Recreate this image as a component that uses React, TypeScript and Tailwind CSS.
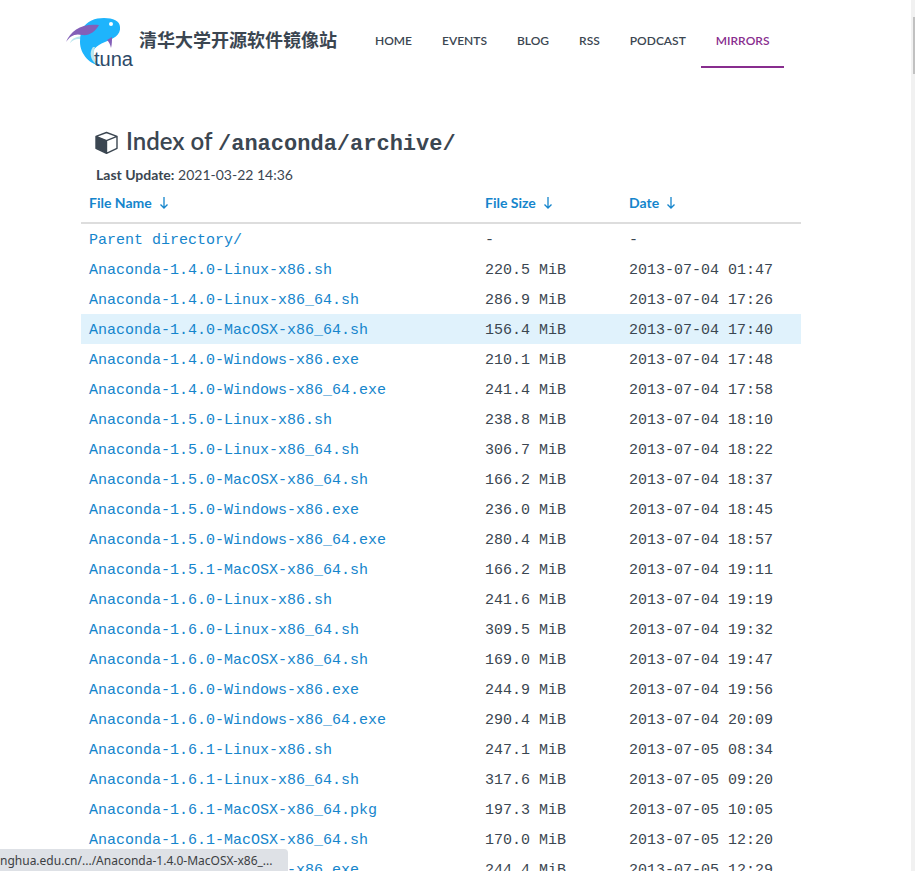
import React from "react";

interface FileEntry {
  name: string;
  size: string;
  date: string;
}

const navItems = ["HOME", "EVENTS", "BLOG", "RSS", "PODCAST", "MIRRORS"];

const files: FileEntry[] = [
  { name: "Parent directory/", size: "-", date: "-" },
  { name: "Anaconda-1.4.0-Linux-x86.sh", size: "220.5 MiB", date: "2013-07-04 01:47" },
  { name: "Anaconda-1.4.0-Linux-x86_64.sh", size: "286.9 MiB", date: "2013-07-04 17:26" },
  { name: "Anaconda-1.4.0-MacOSX-x86_64.sh", size: "156.4 MiB", date: "2013-07-04 17:40" },
  { name: "Anaconda-1.4.0-Windows-x86.exe", size: "210.1 MiB", date: "2013-07-04 17:48" },
  { name: "Anaconda-1.4.0-Windows-x86_64.exe", size: "241.4 MiB", date: "2013-07-04 17:58" },
  { name: "Anaconda-1.5.0-Linux-x86.sh", size: "238.8 MiB", date: "2013-07-04 18:10" },
  { name: "Anaconda-1.5.0-Linux-x86_64.sh", size: "306.7 MiB", date: "2013-07-04 18:22" },
  { name: "Anaconda-1.5.0-MacOSX-x86_64.sh", size: "166.2 MiB", date: "2013-07-04 18:37" },
  { name: "Anaconda-1.5.0-Windows-x86.exe", size: "236.0 MiB", date: "2013-07-04 18:45" },
  { name: "Anaconda-1.5.0-Windows-x86_64.exe", size: "280.4 MiB", date: "2013-07-04 18:57" },
  { name: "Anaconda-1.5.1-MacOSX-x86_64.sh", size: "166.2 MiB", date: "2013-07-04 19:11" },
  { name: "Anaconda-1.6.0-Linux-x86.sh", size: "241.6 MiB", date: "2013-07-04 19:19" },
  { name: "Anaconda-1.6.0-Linux-x86_64.sh", size: "309.5 MiB", date: "2013-07-04 19:32" },
  { name: "Anaconda-1.6.0-MacOSX-x86_64.sh", size: "169.0 MiB", date: "2013-07-04 19:47" },
  { name: "Anaconda-1.6.0-Windows-x86.exe", size: "244.9 MiB", date: "2013-07-04 19:56" },
  { name: "Anaconda-1.6.0-Windows-x86_64.exe", size: "290.4 MiB", date: "2013-07-04 20:09" },
  { name: "Anaconda-1.6.1-Linux-x86.sh", size: "247.1 MiB", date: "2013-07-05 08:34" },
  { name: "Anaconda-1.6.1-Linux-x86_64.sh", size: "317.6 MiB", date: "2013-07-05 09:20" },
  { name: "Anaconda-1.6.1-MacOSX-x86_64.pkg", size: "197.3 MiB", date: "2013-07-05 10:05" },
  { name: "Anaconda-1.6.1-MacOSX-x86_64.sh", size: "170.0 MiB", date: "2013-07-05 12:20" },
  { name: "Anaconda-1.6.1-Windows-x86.exe", size: "244.4 MiB", date: "2013-07-05 12:29" },
];

const ACTIVE_FILE = "Anaconda-1.4.0-MacOSX-x86_64.sh";

function TunaLogo() {
  return (
    <svg className="h-[50px] w-[65px] shrink-0 overflow-visible" viewBox="0 0 65 50" aria-hidden="true">
      {/* Far fin */}
      <path d="M4 26 C6 21 11 19 18 19 L17 23 C12 21 8 22 4 26Z" fill="#b9e6ee" />
      {/* Body */}
      <path
        d="M16 12 C21 4 29 1 38 1 C47 1 54 4 54 10 C55 18 47 22 39 25 C29 29 25 34 27 40 C28 44 31 47 36 49 C24 48 14 37 14 25 C14 19 15 15 16 12Z"
        fill="#1eb4fc"
      />
      <path d="M27 30 C23 35 24 43 31 48 C28 41 27 35 29 30Z" fill="#b9e6ee" />
      {/* Fins */}
      <path d="M0 25 C5 13 16 6 33 8 C29 15 23 19 16 18 C9 16 4 19 0 25Z" fill="#835fb8" />
      <path d="M41 23 L46 20 C46 24 46 27 45 31 C44 27 43 25 41 23Z" fill="#835fb8" />
      <circle cx="45" cy="7" r="2" fill="#fff" />
      <text
        x="28"
        y="49"
        fill="#2d4a68"
        fontSize="20"
        fontFamily="'Liberation Sans', sans-serif"
      >
        tuna
      </text>
    </svg>
  );
}

function CubeIcon() {
  return (
    <svg className="h-6 w-6 shrink-0" viewBox="0 0 24 24" aria-hidden="true">
      <path
        d="M12.5 1.5 L23 5.3 V17.3 L12.5 22.3 L2 17.3 V5.3Z M2 5.3 L12.5 9.6 L23 5.3 M12.5 9.6 V22.3"
        fill="none"
        stroke="#3b4651"
        strokeWidth="1.4"
        strokeLinejoin="round"
      />
      <path d="M2 5.3 L12.5 9.6 V22.3 L2 17.3Z" fill="#3b4651" />
    </svg>
  );
}

function SortArrow() {
  return (
    <svg className="h-3 w-2" viewBox="0 0 8 12" aria-hidden="true">
      <path d="M4 0 V11 M0.5 7.5 L4 11 L7.5 7.5" fill="none" stroke="currentColor" strokeWidth="1.3" />
    </svg>
  );
}

function SortHeader({ label }: { label: string }) {
  return (
    <th className="border-b-2 border-[#dddddd] px-2 pb-[9px] text-left">
      <a href="#sort" className="flex items-center gap-2 text-sm leading-5 font-bold text-[#1585cc]">
        {label}
        <SortArrow />
      </a>
    </th>
  );
}

export default function App() {
  return (
    <div className="flex h-screen overflow-hidden bg-white font-['Lato',sans-serif] text-[#3b4651]">
      <div className="min-w-0 flex-1 pl-[66px]">
        <header className="flex h-[68px] max-w-[750px]">
          <a href="#tuna" className="flex items-center gap-2 pt-4">
            <TunaLogo />
            <span className="pb-1.5 font-['Noto_Sans_CJK_SC',sans-serif] text-lg leading-5 font-bold whitespace-nowrap">
              清华大学开源软件镜像站
            </span>
          </a>
          <nav className="ml-[23px] flex">
            {navItems.map((item) => (
              <a
                key={item}
                href={`#${item.toLowerCase()}`}
                className={`border-b-2 px-[15px] pt-[31px] text-xs leading-5 font-semibold ${
                  item === "MIRRORS" ? "border-[#882d8e] text-[#882d8e]" : "border-transparent"
                }`}
              >
                {item}
              </a>
            ))}
          </nav>
        </header>

        <main className="max-w-[750px] px-[15px] pt-[59px]">
          <h1 className="flex h-8 items-center gap-2 px-[13px] text-2xl leading-8 font-semibold whitespace-nowrap">
            <CubeIcon />
            <span>
              Index of{" "}
              <span className="font-['Liberation_Mono',monospace] text-[22px] font-bold">/anaconda/archive/</span>
            </span>
          </h1>
          <p className="px-[15px] pt-1.5 text-sm leading-5">
            <b>Last Update:</b> 2021-03-22 14:36
          </p>

          <table className="mt-2 w-full table-fixed border-separate border-spacing-0">
            <colgroup>
              <col className="w-[55%]" />
              <col className="w-[20%]" />
              <col className="w-[25%]" />
            </colgroup>
            <thead>
              <tr>
                <SortHeader label="File Name" />
                <SortHeader label="File Size" />
                <SortHeader label="Date" />
              </tr>
            </thead>
            <tbody className="font-['Liberation_Mono',monospace] text-[15px] leading-5 whitespace-nowrap">
              {files.map((file) => (
                <tr key={file.name} className={file.name === ACTIVE_FILE ? "h-[30px] bg-[#e0f2fc]" : "h-[30px]"}>
                  <td className="px-2 pt-1">
                    <a href={`#${file.name}`} className="text-[#1585cc]">
                      {file.name}
                    </a>
                  </td>
                  <td className="px-2 pt-1">{file.size}</td>
                  <td className="px-2 pt-1">{file.date}</td>
                </tr>
              ))}
            </tbody>
          </table>
        </main>
      </div>

      {/* Scroll track */}
      <div className="flex w-1 shrink-0 justify-end bg-[#f1f1f1] pt-[17px]">
        <div className="h-[57px] w-0.5 bg-[#c1c1c1]" />
      </div>

      {/* Link preview */}
      <div className="fixed bottom-0 left-0 h-[22px] w-72 overflow-hidden rounded-tr bg-[#dee1e6] font-['Noto_Sans',sans-serif] text-xs leading-6 whitespace-nowrap text-[#3c4043]">
        nghua.edu.cn/.../Anaconda-1.4.0-MacOSX-x86_...
      </div>
    </div>
  );
}
